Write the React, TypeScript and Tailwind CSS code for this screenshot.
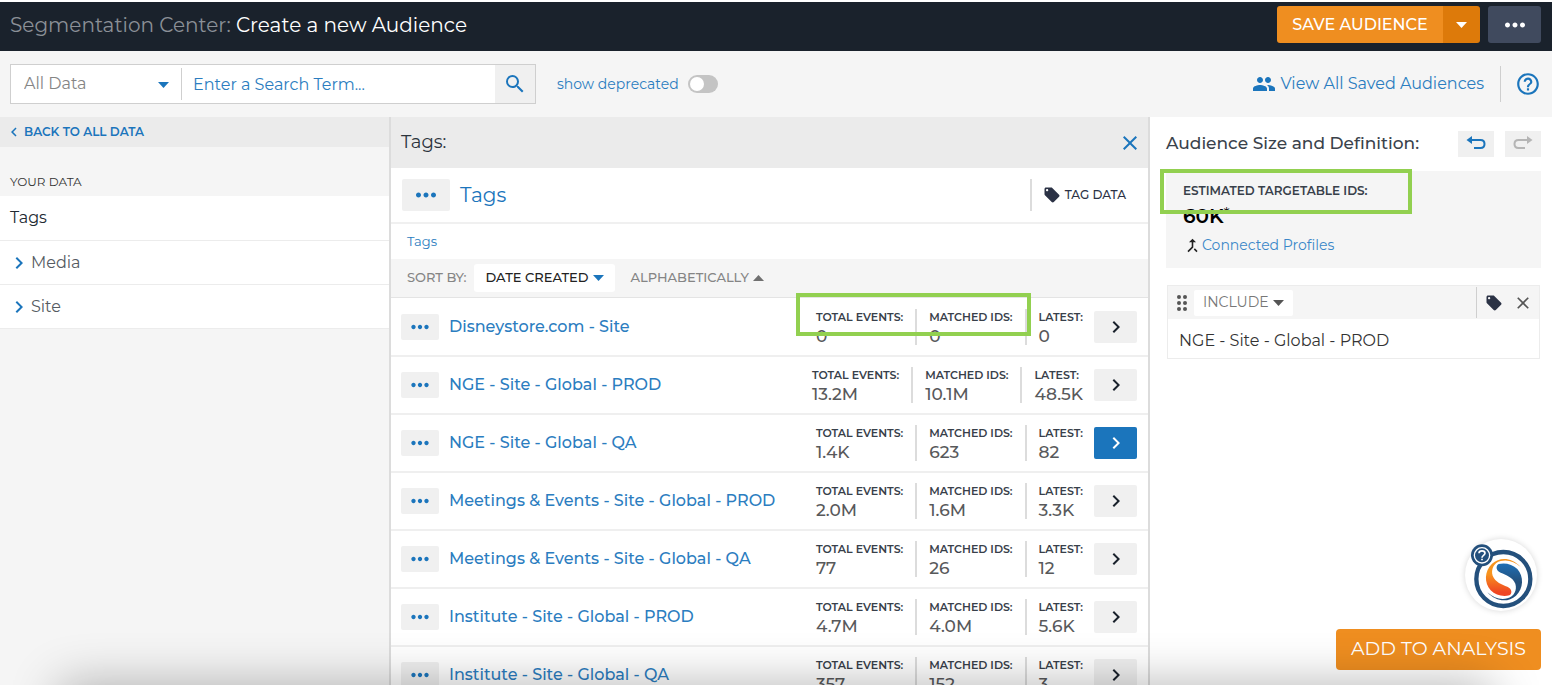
import React from "react";
import {
  MdCallMerge,
  MdChevronLeft,
  MdChevronRight,
  MdClose,
  MdGroup,
  MdHelpOutline,
  MdLocalOffer,
  MdMoreHoriz,
  MdSearch,
} from "react-icons/md";

type Tag = { name: string; events: string; ids: string; latest: string; active?: boolean };

const tags: Tag[] = [
  { name: "Disneystore.com - Site", events: "0", ids: "0", latest: "0" },
  { name: "NGE - Site - Global - PROD", events: "13.2M", ids: "10.1M", latest: "48.5K" },
  { name: "NGE - Site - Global - QA", events: "1.4K", ids: "623", latest: "82", active: true },
  { name: "Meetings & Events - Site - Global - PROD", events: "2.0M", ids: "1.6M", latest: "3.3K" },
  { name: "Meetings & Events - Site - Global - QA", events: "77", ids: "26", latest: "12" },
  { name: "Institute - Site - Global - PROD", events: "4.7M", ids: "4.0M", latest: "5.6K" },
  { name: "Institute - Site - Global - QA", events: "357", ids: "152", latest: "3" },
];

function Triangle({ className = "" }: { className?: string }) {
  return (
    <svg width="11" height="6" viewBox="0 0 11 6" fill="currentColor" className={className}>
      <path d="M0 0h11L5.500 6z" />
    </svg>
  );
}

function Header() {
  return (
    <header className="flex h-[49px] shrink-0 items-center justify-between bg-[#1a222c] pr-[11px] pb-1 pl-[10px]">
      <h1 className="text-[20px] text-white">
        <span className="text-[#8b9097]">Segmentation Center:</span> Create a new Audience
      </h1>
      <div className="flex gap-2">
        <div className="flex h-[37px] overflow-hidden rounded-[3px] text-white">
          <button className="w-[166px] bg-[#ef8e20] text-[16px] font-medium">SAVE AUDIENCE</button>
          <button aria-label="More save options" className="flex w-[37px] items-center justify-center bg-[#dd7a0a]">
            <Triangle />
          </button>
        </div>
        <button
          aria-label="More actions"
          className="flex h-[37px] w-[53px] items-center justify-center rounded-[3px] bg-[#404a5e] text-white"
        >
          <MdMoreHoriz size={30} />
        </button>
      </div>
    </header>
  );
}

function Toolbar() {
  return (
    <div className="flex h-[66px] shrink-0 items-center bg-[#f5f5f5] pr-[11px] pl-[10px]">
      <div className="flex h-10 w-[526px] items-center border border-[#cfcfcf] bg-white">
        <div className="relative w-[170px]">
          <select
            aria-label="Data type"
            className="w-full appearance-none bg-transparent pl-[13px] text-[16px] text-[#858585] outline-none"
          >
            <option>All Data</option>
          </select>
          <Triangle className="pointer-events-none absolute top-[10px] right-3 text-[#1b75bc]" />
        </div>
        <input
          aria-label="Search term"
          placeholder="Enter a Search Term..."
          className="h-8 min-w-0 flex-1 border-l border-[#cfcfcf] pl-[11px] text-[16px] text-[#1b75bc] outline-none placeholder:text-[#2b7dc0]"
        />
        <button aria-label="Search" className="flex h-full w-10 items-center justify-center bg-[#f0f0f0] text-[#1b75bc]">
          <MdSearch size={24} />
        </button>
      </div>
      <label className="ml-[21px] flex items-center gap-[9px] text-[14px] text-[#2b7dc0]">
        show deprecated
        <input type="checkbox" role="switch" className="peer sr-only" />
        <span className="flex h-[18px] w-[30px] items-center rounded-full bg-[#c4c4c4] p-[2px] peer-checked:justify-end">
          <span className="h-[14px] w-[14px] rounded-full bg-white" />
        </span>
      </label>
      <a href="#saved" className="ml-auto flex items-center gap-1 text-[16px] text-[#2b7dc0]">
        <MdGroup size={24} className="text-[#1b75bc]" />
        View All Saved Audiences
      </a>
      <button aria-label="Help" className="ml-4 flex h-9 items-center border-l border-[#cfcfcf] pl-[14px] text-[#1b75bc]">
        <MdHelpOutline size={26} />
      </button>
    </div>
  );
}

function Sidebar() {
  return (
    <nav className="w-[391px] shrink-0 border-r-2 border-[#dcdcdc] bg-[#f5f5f5]">
      <a
        href="#all"
        className="flex h-[30px] items-center gap-[1px] bg-[#ebebeb] pl-[5px] text-[12px] font-semibold text-[#1b75bc]"
      >
        <MdChevronLeft size={18} />
        BACK TO ALL DATA
      </a>
      <h2 className="flex h-[49px] items-end pb-[5px] pl-[10px] text-[12px] text-[#333]">YOUR DATA</h2>
      <ul className="text-[16px]">
        <li className="flex h-[45px] items-center border-b border-[#ececec] bg-white pl-[10px] text-[#222a32]">Tags</li>
        {["Media", "Site"].map((item) => (
          <li key={item} className="h-[44px] border-b border-[#ececec] bg-white text-[#555b62]">
            <button className="flex h-full w-full items-center pl-[7px]">
              <MdChevronRight size={24} className="text-[#1b75bc]" />
              {item}
            </button>
          </li>
        ))}
      </ul>
    </nav>
  );
}

function Stat({ label, value }: { label: string; value: string }) {
  return (
    <div className="flex h-9 flex-col justify-center border-l-2 border-[#dcdcdc] px-3 pt-[2px] first:border-l-0 last:pr-[11px]">
      <dt className="text-[11px] leading-[16px] font-semibold text-[#38404a]">{label}</dt>
      <dd className="text-[17px] leading-[22px] font-medium text-[#58595b]">{value}</dd>
    </div>
  );
}

function TagRow({ tag, highlighted }: { tag: Tag; highlighted: boolean }) {
  return (
    <li className="relative flex h-[58px] items-center border-b-2 border-[#efefef] bg-white pr-[11px] pl-[10px]">
      <button
        aria-label={`Options for ${tag.name}`}
        className="flex h-[26px] w-[38px] items-center justify-center rounded-[2px] bg-[#f0f0f0] text-[#1b75bc]"
      >
        <MdMoreHoriz size={26} />
      </button>
      <a href="#tag" className="ml-[10px] flex-1 text-[16px] font-medium whitespace-nowrap text-[#2b7dc0]">
        {tag.name}
      </a>
      <dl className="flex">
        <Stat label="TOTAL EVENTS:" value={tag.events} />
        <Stat label="MATCHED IDS:" value={tag.ids} />
        <Stat label="LATEST:" value={tag.latest} />
      </dl>
      <button
        aria-label={`Open ${tag.name}`}
        className={
          tag.active
            ? "flex h-8 w-[43px] items-center justify-center rounded-[2px] bg-[#1b75bc] text-white"
            : "flex h-8 w-[43px] items-center justify-center rounded-[2px] bg-[#f0f0f0] text-[#1a222c]"
        }
      >
        <MdChevronRight size={24} />
      </button>
      {highlighted && (
        <div className="pointer-events-none absolute -top-[6px] right-[117px] h-[43px] w-[235px] border-4 border-[#92d050]" />
      )}
    </li>
  );
}

function TagList() {
  return (
    <main className="flex min-w-0 flex-1 flex-col border-r-2 border-[#dcdcdc] bg-white">
      <div className="flex h-[51px] shrink-0 items-center justify-between bg-[#ebebeb] pr-[6px] pl-[10px]">
        <h2 className="text-[18px] text-[#2b333c]">Tags:</h2>
        <button aria-label="Close" className="text-[#1b75bc]">
          <MdClose size={24} />
        </button>
      </div>
      <div className="flex h-14 shrink-0 items-center border-b-2 border-[#f0f0f0] pr-[22px] pl-[11px]">
        <button
          aria-label="Tag options"
          className="flex h-8 w-12 items-center justify-center rounded-[2px] bg-[#f0f0f0] text-[#1b75bc]"
        >
          <MdMoreHoriz size={30} />
        </button>
        <h3 className="ml-[10px] text-[20px] text-[#1b75bc]">Tags</h3>
        <button className="ml-auto flex h-8 items-center gap-1 border-l-2 border-[#dcdcdc] pl-[11px] text-[12px] font-medium text-[#2b3245]">
          <MdLocalOffer size={18} />
          TAG DATA
        </button>
      </div>
      <div className="flex h-[35px] shrink-0 items-center pl-4 text-[13px]">
        <a href="#tags" className="text-[#2b7dc0]">
          Tags
        </a>
      </div>
      <div className="flex h-[39px] shrink-0 items-center border-b border-[#e4e4e4] bg-[#f5f5f5] pl-4 text-[13px] font-medium text-[#858585]">
        <span>SORT BY:</span>
        <button className="ml-2 flex h-7 items-center gap-1 rounded-[3px] bg-white px-[11px] text-[#222]">
          DATE CREATED
          <Triangle className="text-[#1b75bc]" />
        </button>
        <button className="ml-4 flex items-center gap-1">
          ALPHABETICALLY
          <Triangle className="rotate-180 text-[#707070]" />
        </button>
      </div>
      <ul className="pt-[1px]">
        {tags.map((tag, index) => (
          <TagRow key={tag.name} tag={tag} highlighted={index === 0} />
        ))}
      </ul>
    </main>
  );
}

function ReturnArrow() {
  return (
    <svg width="20" height="16" viewBox="0 0 20 16" fill="none" stroke="currentColor" strokeWidth="2">
      <path d="M3 4h11.500q4 0 4 4t-4 4H8" />
      <path d="M6 0v8L0.500 4z" fill="currentColor" stroke="none" />
    </svg>
  );
}

function AudiencePanel() {
  return (
    <aside className="flex w-[402px] shrink-0 flex-col bg-white pr-[11px] pl-4">
      <div className="flex h-[54px] items-center gap-[11px]">
        <h2 className="flex-1 text-[17px] font-medium text-[#3a424b]">Audience Size and Definition:</h2>
        <button aria-label="Undo" className="flex h-[26px] w-9 items-center justify-center bg-[#f0f0f0] text-[#1b75bc]">
          <ReturnArrow />
        </button>
        <button
          aria-label="Redo"
          className="flex h-[26px] w-9 -scale-x-100 items-center justify-center bg-[#f0f0f0] text-[#b5b5b5]"
        >
          <ReturnArrow />
        </button>
      </div>
      <section className="relative h-[97px] bg-[#f5f5f5] px-[17px] pt-3">
        <h3 className="text-[12px] leading-[16px] font-semibold text-[#38404a]">ESTIMATED TARGETABLE IDS:</h3>
        <p className="flex text-[20px] leading-[34px] font-semibold text-black">
          60K<span className="text-[16px] leading-[32px] font-normal">*</span>
        </p>
        <a href="#profiles" className="flex items-center text-[14px] leading-[24px] text-[#3a87c8]">
          <MdCallMerge size={19} className="text-[#222]" />
          Connected Profiles
        </a>
        <div className="pointer-events-none absolute -top-[2px] -left-[6px] h-[45px] w-[252px] border-4 border-[#92d050]" />
      </section>
      <section className="mt-[17px] mr-[1px] ml-[1px] border border-[#ececec]">
        <div className="flex h-[33px] items-center bg-[#f5f5f5] pr-[6px] pl-2">
          <svg width="12" height="16" viewBox="0 0 12 16" fill="#555">
            <circle cx="3" cy="2" r="2" />
            <circle cx="9" cy="2" r="2" />
            <circle cx="3" cy="8" r="2" />
            <circle cx="9" cy="8" r="2" />
            <circle cx="3" cy="14" r="2" />
            <circle cx="9" cy="14" r="2" />
          </svg>
          <button className="ml-[6px] flex h-[26px] items-center gap-1 rounded-[2px] bg-white px-[9px] text-[14px] text-[#777]">
            INCLUDE
            <Triangle className="text-[#555]" />
          </button>
          <button aria-label="Tag" className="ml-auto flex h-[31px] items-center border-l border-[#cfcfcf] pl-2 text-[#2b3245]">
            <MdLocalOffer size={18} />
          </button>
          <button aria-label="Remove" className="ml-[10px] text-[#555]">
            <MdClose size={20} />
          </button>
        </div>
        <p className="flex h-[39px] items-center pt-1 pl-[11px] text-[16px] text-[#333]">NGE - Site - Global - PROD</p>
      </section>
      <div className="mt-auto mb-[15px] flex flex-col items-end gap-[18px]">
        <button aria-label="Assistant" className="mr-1 h-[72px] w-[72px] rounded-full bg-white shadow-[0_0_6px_rgba(0,0,0,0.16)]">
          <svg width="72" height="72" viewBox="435 24 216 216" fill="none">
            <defs>
              <linearGradient id="flame" x1="0" y1="0" x2="0" y2="1">
                <stop offset="0.4" stopColor="#f7941e" />
                <stop offset="0.9" stopColor="#ef4623" />
              </linearGradient>
              <linearGradient id="wave" x1="0" y1="0" x2="0" y2="1">
                <stop offset="0.5" stopColor="#24507c" />
                <stop offset="1" stopColor="#1f6fb5" />
              </linearGradient>
            </defs>
            <circle cx="550" cy="144" r="81" stroke="#24507c" strokeWidth="13" />
            <path
              d="M602 108C575 79 540 77 516 98C493 120 492 155 512 178C526 193 550 198 568 193C577 188 577 173 562 167C546 160 526 154 518 134C512 115 522 95 542 90C562 85 584 91 602 108Z"
              fill="url(#flame)"
            />
            <path
              d="M602 108C575 79 540 77 516 98C493 120 492 155 512 178C526 193 550 198 568 193C577 188 577 173 562 167C546 160 526 154 518 134C512 115 522 95 542 90C562 85 584 91 602 108Z"
              fill="url(#wave)"
              transform="rotate(180 552 146)"
            />
            <circle cx="486" cy="73" r="33" fill="#24507c" />
            <circle cx="486" cy="73" r="23" stroke="#fff" strokeWidth="4" />
            <path d="M477 67C477 57 495 57 495 67C495 73 486 73 486 80M486 83v5" stroke="#fff" strokeWidth="5" />
          </svg>
        </button>
        <button className="h-[41px] w-[205px] rounded-[4px] bg-[#ef8e20] text-[19px] text-white">ADD TO ANALYSIS</button>
      </div>
    </aside>
  );
}

export default function App() {
  return (
    <div className="h-screen overflow-hidden bg-white pt-[2px] pr-[3px] pb-[2px] font-['Montserrat','Inter',sans-serif]">
      <div className="relative flex h-full flex-col overflow-hidden">
        <Header />
        <Toolbar />
        <div className="flex min-h-0 flex-1 overflow-hidden">
          <Sidebar />
          <TagList />
          <AudiencePanel />
        </div>
        <div className="pointer-events-none absolute top-full right-[60px] left-[60px] h-20 shadow-[0_0_50px_rgba(0,0,0,0.3)]" />
      </div>
    </div>
  );
}
